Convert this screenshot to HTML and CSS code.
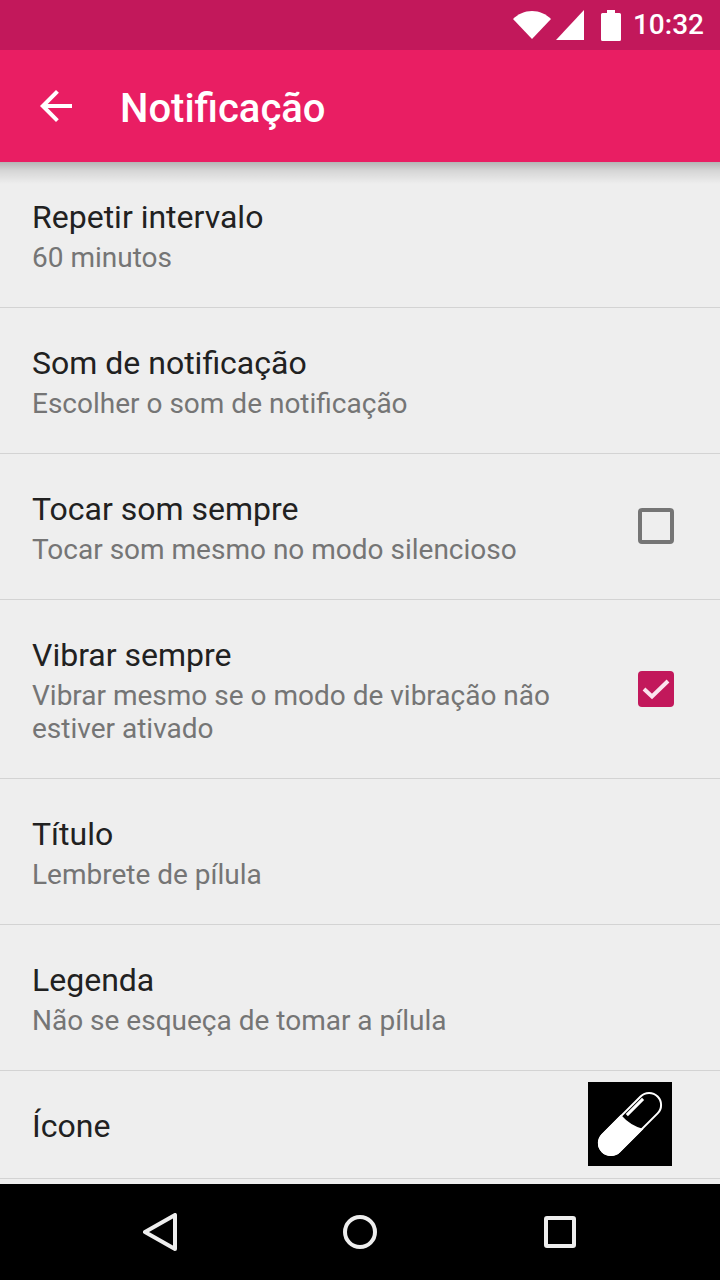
FILE: index.html
```html
<!DOCTYPE html>
<html lang="pt">
<head>
<meta charset="utf-8">
<title>Notificação</title>
<link rel="stylesheet" href="styles.css">
</head>
<body>
<div class="screen">
  <div class="statusbar">
    <svg class="ic-wifi" width="38" height="28" viewBox="0 0 38 28"><path d="M0 8C5 3 11.500 0 19 0s14 3 19 8L19 28z" fill="#fff"/></svg>
    <svg class="ic-signal" width="28" height="30" viewBox="0 0 28 30"><path d="M28 0v30H0z" fill="#fff"/></svg>
    <svg class="ic-battery" width="20" height="31" viewBox="0 0 20 31"><path d="M6 0h8v3h4.500q1.500 0 1.500 1.500v25q0 1.500-1.500 1.500h-17Q0 31 0 29.500v-25Q0 3 1.500 3H6z" fill="#fff"/></svg>
    <span class="clock">10:32</span>
  </div>
  <header class="toolbar">
    <svg class="ic-back" width="32" height="32" viewBox="0 0 32 32"><path d="M32 14H7.700l11.200-11.200L16 0 0 16l16 16 2.800-2.800L7.700 18H32z" fill="#fff"/></svg>
    <h1 class="toolbar-title">Notificação</h1>
  </header>
  <main class="list">
    <div class="row">
      <div class="text"><div class="title">Repetir intervalo</div><div class="summary">60 minutos</div></div>
    </div>
    <div class="row">
      <div class="text"><div class="title">Som de notificação</div><div class="summary">Escolher o som de notificação</div></div>
    </div>
    <div class="row">
      <div class="text"><div class="title">Tocar som sempre</div><div class="summary">Tocar som mesmo no modo silencioso</div></div>
      <span class="check"></span>
    </div>
    <div class="row">
      <div class="text"><div class="title">Vibrar sempre</div><div class="summary">Vibrar mesmo se o modo de vibração não<br>estiver ativado</div></div>
      <span class="check checked"><svg width="36" height="36" viewBox="0 0 36 36"><path d="M6 18l8 7.500L30 10" fill="none" stroke="#fbe4ee" stroke-width="4"/></svg></span>
    </div>
    <div class="row">
      <div class="text"><div class="title">Título</div><div class="summary">Lembrete de pílula</div></div>
    </div>
    <div class="row">
      <div class="text"><div class="title">Legenda</div><div class="summary">Não se esqueça de tomar a pílula</div></div>
    </div>
    <div class="row row-icon">
      <div class="title">Ícone</div>
      <svg class="pill" width="84" height="84" viewBox="0 0 84 84">
        <rect width="84" height="84" fill="#000"/>
        <g transform="rotate(-45 42 42)">
          <rect x="3" y="30" width="78" height="24" rx="12" fill="#000" stroke="#fff" stroke-width="2"/>
          <path d="M42 29Q41 44 48 55H15A13 13 0 0 1 15 29z" fill="#fff"/>
          <path d="M46 33.500H69" fill="none" stroke="#fff" stroke-width="3"/>
        </g>
      </svg>
    </div>
  </main>
  <nav class="navbar">
    <svg class="nav-icon" width="34" height="38" viewBox="0 0 34 38"><path d="M32 2v34L2 19z" fill="none" stroke="#eee" stroke-width="4" stroke-linejoin="round"/></svg>
    <svg class="nav-icon" width="34" height="34" viewBox="0 0 34 34"><circle cx="17" cy="17" r="15" fill="none" stroke="#eee" stroke-width="4"/></svg>
    <svg class="nav-icon" width="34" height="34" viewBox="0 0 34 34"><rect x="3" y="3" width="28" height="28" rx="1" fill="none" stroke="#eee" stroke-width="4"/></svg>
  </nav>
</div>
</body>
</html>
```
FILE: styles.css
```css
* { box-sizing: border-box; }
html, body { margin: 0; padding: 0; }
body { width: 720px; height: 1280px; overflow: hidden; font-family: Roboto, "Liberation Sans", sans-serif; background: #eeeeee; }
.screen { width: 720px; height: 1280px; display: flex; flex-direction: column; }
.statusbar { height: 50px; background: #c2185b; display: flex; align-items: center; justify-content: flex-end; padding-right: 16px; color: #fff; flex: none; }
.ic-wifi { margin-right: 5px; }
.ic-signal { margin-right: 17px; }
.ic-battery { margin-right: 12px; }
.clock { font-size: 28px; font-weight: 500; line-height: 50px; }
.toolbar { height: 112px; background: #e91e63; display: flex; align-items: center; padding-left: 40px; flex: none; position: relative; z-index: 1; }
.toolbar::after { content: ""; position: absolute; left: 0; right: 0; top: 100%; height: 22px; background: linear-gradient(to bottom, rgba(0,0,0,.24), rgba(0,0,0,.1) 40%, rgba(0,0,0,0)); }
.ic-back { flex: none; }
.toolbar-title { margin: 5px 0 0 48px; font-size: 40px; font-weight: 500; color: #fff; line-height: 1; }
.list { flex: 1; min-height: 0; }
.row { display: flex; align-items: center; justify-content: space-between; min-height: 146px; padding: 33px 46px 33px 32px; border-bottom: 1px solid #d3d3d3; }
.title { font-size: 32px; line-height: 44px; color: #212121; }
.summary { font-size: 28px; line-height: 33px; color: #757575; margin-top: 2px; }
.check { width: 36px; height: 36px; border: 4px solid #757575; border-radius: 4px; flex: none; display: block; margin-top: -2px; }
.check.checked { border: 0; background: #c2185b; margin-top: 0; }
.check svg { display: block; }
.row-icon { min-height: 108px; padding: 11px 48px 12px 32px; }
.row-icon .title { margin-top: 4px; }
.pill { display: block; flex: none; }
.navbar { height: 96px; background: #000; display: flex; align-items: center; flex: none; gap: 166px; padding-left: 143px; }
.nav-icon { display: block; flex: none; }
```
